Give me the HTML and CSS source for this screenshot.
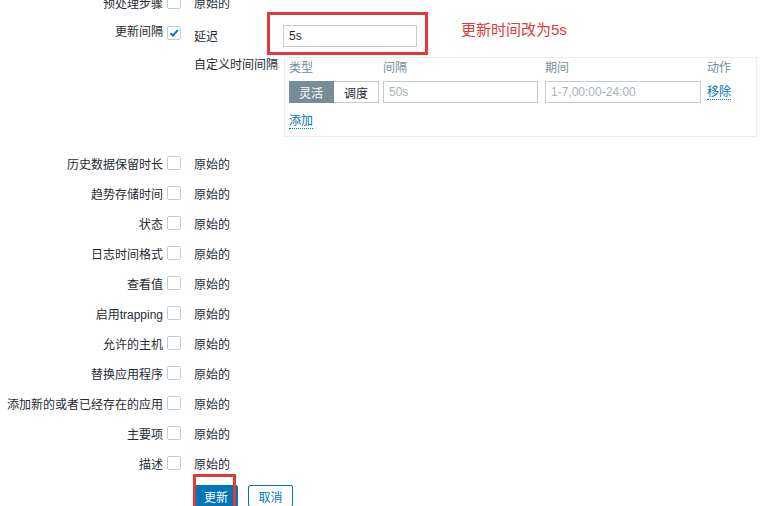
FILE: index.html
```html
<!DOCTYPE html>
<html lang="zh-CN">
<head>
    <meta charset="UTF-8">
    <title>批量更新</title>
    <link rel="stylesheet" href="styles.css">
</head>
<body>
    <div class="form">
        <div class="row">
            <div class="label">预处理步骤</div>
            <span class="check"></span>
            <div class="value">原始的</div>
        </div>

        <div class="row row-interval">
            <div class="label">更新间隔</div>
            <span class="check checked">
                <svg width="12" height="12" viewBox="0 0 12 12"><path d="M2.5 6.2 L5 8.6 L9.8 3.2" fill="none" stroke="#0275b8" stroke-width="2"/></svg>
            </span>
            <div class="value">
                <div class="delay">
                    <span class="sub-label">延迟</span>
                    <input class="text-input delay-input" type="text" value="5s">
                </div>
                <div class="custom">
                    <span class="sub-label">自定义时间间隔</span>
                    <div class="interval-box">
                        <div class="interval-grid">
                            <span class="th">类型</span>
                            <span class="th">间隔</span>
                            <span class="th">期间</span>
                            <span class="th">动作</span>

                            <div class="segment">
                                <span class="seg active">灵活</span>
                                <span class="seg">调度</span>
                            </div>
                            <input class="text-input w-interval" type="text" placeholder="50s">
                            <input class="text-input w-period" type="text" placeholder="1-7,00:00-24:00">
                            <a class="link">移除</a>
                        </div>
                        <a class="link add-link">添加</a>
                    </div>
                </div>
            </div>
        </div>

        <div class="row"><div class="label">历史数据保留时长</div><span class="check"></span><div class="value">原始的</div></div>
        <div class="row"><div class="label">趋势存储时间</div><span class="check"></span><div class="value">原始的</div></div>
        <div class="row"><div class="label">状态</div><span class="check"></span><div class="value">原始的</div></div>
        <div class="row"><div class="label">日志时间格式</div><span class="check"></span><div class="value">原始的</div></div>
        <div class="row"><div class="label">查看值</div><span class="check"></span><div class="value">原始的</div></div>
        <div class="row"><div class="label">启用trapping</div><span class="check"></span><div class="value">原始的</div></div>
        <div class="row"><div class="label">允许的主机</div><span class="check"></span><div class="value">原始的</div></div>
        <div class="row"><div class="label">替换应用程序</div><span class="check"></span><div class="value">原始的</div></div>
        <div class="row"><div class="label">添加新的或者已经存在的应用</div><span class="check"></span><div class="value">原始的</div></div>
        <div class="row"><div class="label">主要项</div><span class="check"></span><div class="value">原始的</div></div>
        <div class="row"><div class="label">描述</div><span class="check"></span><div class="value">原始的</div></div>

        <div class="buttons">
            <button class="btn btn-primary">更新</button>
            <button class="btn btn-alt">取消</button>
        </div>
    </div>

    <!-- annotations drawn over the screenshot -->
    <div class="mark mark-delay"></div>
    <div class="mark mark-submit"></div>
    <div class="note">更新时间改为5s</div>
</body>
</html>
```

FILE: styles.css
```css
body {
    margin: 0;
    font-family: "Liberation Sans", Arial, "Noto Sans CJK SC", sans-serif;
    font-size: 12px;
    color: #1f2c33;
    background: #fff;
    position: relative;
    height: 506px;
    overflow: hidden;
}

.form {
    margin-top: -13px;
}

.row {
    display: flex;
    align-items: center;
    height: 30px;
}

.label {
    width: 163px;
    text-align: right;
    white-space: nowrap;
}

.check {
    width: 14px;
    height: 14px;
    box-sizing: border-box;
    border: 1px solid #c5cdd1;
    border-radius: 2px;
    margin-left: 4px;
    display: flex;
    align-items: center;
    justify-content: center;
    flex: none;
}

.value {
    margin-left: 13px;
}

/* update interval row */
.row-interval {
    height: 131px;
    align-items: flex-start;
}
.row-interval .label {
    line-height: 30px;
}
.row-interval .check {
    margin-top: 9px;
}

.delay {
    display: flex;
    align-items: center;
    margin-top: 8px;
}

.sub-label {
    width: 89px;
    flex: none;
    margin-top: -2px;
}

.text-input {
    height: 22px;
    box-sizing: border-box;
    border: 1px solid #c5cdd1;
    padding: 0 5px;
    font: inherit;
    color: #1f2c33;
    outline: none;
}
.text-input::placeholder {
    color: #a8b2b8;
}

.delay-input {
    width: 134px;
}

.custom {
    display: flex;
    align-items: flex-start;
    margin-top: 10px;
}
.custom .sub-label {
    width: 90px;
    margin-top: -2px;
}

.interval-box {
    width: 473px;
    height: 80px;
    box-sizing: border-box;
    border: 1px solid #ebeef0;
    padding: 3px 4px 0;
}

.interval-grid {
    display: grid;
    grid-template-columns: 94px 162px 162px 1fr;
    row-gap: 6px;
    align-items: center;
}

.th {
    color: #768d99;
    line-height: 14px;
}

.segment {
    display: flex;
    height: 22px;
}
.seg {
    width: 45px;
    box-sizing: border-box;
    display: flex;
    align-items: center;
    justify-content: center;
    border: 1px solid #c5cdd1;
    border-left: none;
    background: #fff;
}
.seg.active {
    background: #768d99;
    border-color: #768d99;
    color: #fff;
}

.w-interval { width: 155px; }
.w-period { width: 156px; }

.link {
    color: #0275b8;
    border-bottom: 1px dotted #0275b8;
    justify-self: start;
    line-height: 14px;
}

.add-link {
    display: inline-block;
    margin-top: 11px;
}

/* footer buttons */
.buttons {
    display: flex;
    gap: 10px;
    margin: 7px 0 0 194px;
}

.btn {
    height: 22px;
    padding: 0;
    font: inherit;
    white-space: nowrap;
    border-radius: 2px;
    border: 1px solid #0275b8;
}
.btn-primary {
    background: #0275b8;
    color: #fff;
    width: 44px;
}
.btn-alt {
    background: #fff;
    color: #0275b8;
    width: 45px;
}

/* annotations */
.mark {
    position: absolute;
    border: 3px solid #e2393c;
    box-sizing: border-box;
}
.mark-delay {
    left: 267px;
    top: 12px;
    width: 161px;
    height: 43px;
}
.mark-submit {
    left: 193px;
    top: 474px;
    width: 43px;
    height: 40px;
}

.note {
    position: absolute;
    left: 461px;
    top: 18px;
    font-size: 15px;
    color: #e2393c;
}
```
